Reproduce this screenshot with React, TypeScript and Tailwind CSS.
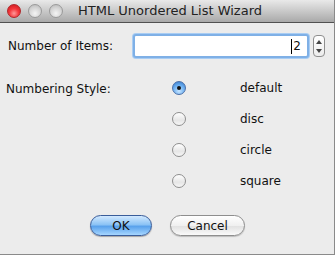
import React from "react";

const font = { fontFamily: '"Lucida Grande", "DejaVu Sans", "Liberation Sans", sans-serif' };

function Light({ red }: { red?: boolean }) {
  return (
    <div
      className={
        "w-[14px] h-[14px] rounded-full border " +
        (red
          ? "border-[#b0272a] bg-[radial-gradient(circle_at_50%_70%,#ff9a9a_0%,#f5383c_45%,#c8151a_100%)]"
          : "border-[#9a9a9a] bg-[radial-gradient(circle_at_50%_70%,#f4f4f4_0%,#d4d4d4_55%,#b4b4b4_100%)]")
      }
    />
  );
}

function Radio({ checked }: { checked?: boolean }) {
  return checked ? (
    <div className="w-[14px] h-[14px] rounded-full border border-[#4a6fa8] bg-[radial-gradient(circle_at_50%_75%,#c9e6ff_0%,#6fb1f1_50%,#2f76c9_100%)] flex items-center justify-center">
      <div className="w-[4px] h-[4px] rounded-full bg-[#111]" />
    </div>
  ) : (
    <div className="w-[14px] h-[14px] rounded-full border border-[#8e8e8e] bg-[linear-gradient(#ffffff,#e6e6e6_60%,#f6f6f6)]" />
  );
}

export default function App() {
  const opts = ["default", "disc", "circle", "square"];
  return (
    <div className="w-[336px] h-[256px] bg-white" style={font}>
      <div className="w-[335px] h-[255px] bg-[#ececec] border-r border-b border-[#8a8a8a] flex flex-col text-[12px] text-[#111]">
        <div className="h-[23px] shrink-0 flex items-center border-b border-[#515151] bg-[linear-gradient(#e9e9e9,#c9c9c9_50%,#a9a9a9)] pl-[7px]">
          <div className="flex gap-[7px]">
            <Light red />
            <Light />
            <Light />
          </div>
          <div className="ml-[15px] text-[13px] text-[#222]">HTML Unordered List Wizard</div>
        </div>
        <div className="flex items-center mt-[11px] h-[24px]">
          <div className="pl-[8px] w-[133px]">Number of Items:</div>
          <div className="w-[176px] h-[24px] rounded-[3px] border-[2px] border-[#7fb0e6] shadow-[0_0_0_1px_#a9cdf3] bg-white flex items-center justify-end pr-[6px]">
            <span className="w-px h-[15px] bg-black mr-[1px]" />
            <span>2</span>
          </div>
          <div className="ml-[4px] w-[12px] h-[22px] rounded-[4px] border border-[#8e8e8e] bg-[linear-gradient(#fff,#ececec)] flex flex-col items-center justify-center gap-[5px]">
            <div className="w-0 h-0 border-l-[3px] border-r-[3px] border-b-[4px] border-l-transparent border-r-transparent border-b-[#444]" />
            <div className="w-0 h-0 border-l-[3px] border-r-[3px] border-t-[4px] border-l-transparent border-r-transparent border-t-[#444]" />
          </div>
        </div>
        <div className="flex mt-[23px]">
          <div className="pl-[6px] w-[172px] h-[16px] leading-[16px]">Numbering Style:</div>
          <div className="flex flex-col gap-[17px]">
            {opts.map((o, i) => (
              <div key={o} className="flex items-center h-[14px]">
                <Radio checked={i === 0} />
                <span className="ml-[54px]">{o}</span>
              </div>
            ))}
          </div>
        </div>
        <div className="flex mt-[27px] pl-[90px] gap-[18px]">
          <div className="w-[62px] h-[21px] rounded-full border border-[#3a5d9a] bg-[linear-gradient(#d2e9ff,#8cc3f5_45%,#5aa2ec_55%,#a6d6ff)] flex items-center justify-center shadow-[0_1px_1px_rgba(0,0,0,0.3)]">
            OK
          </div>
          <div className="w-[75px] h-[21px] rounded-full border border-[#8e8e8e] bg-[linear-gradient(#ffffff,#f0f0f0_50%,#e2e2e2_55%,#fafafa)] flex items-center justify-center shadow-[0_1px_1px_rgba(0,0,0,0.2)]">
            Cancel
          </div>
        </div>
      </div>
    </div>
  );
}
